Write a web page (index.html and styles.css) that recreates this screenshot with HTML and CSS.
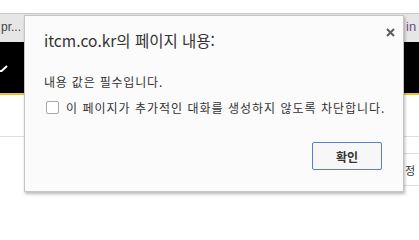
FILE: index.html
```html
<!DOCTYPE html>
<html lang="ko">
<head>
<meta charset="utf-8">
<title>alert</title>
<link rel="stylesheet" href="styles.css">
</head>
<body>
<div class="page">
  <div class="topgap"></div>
  <div class="tabs">
    <span class="tab-left">pr...</span>
    <span class="tab-right">in</span>
  </div>
  <div class="nav">
    <svg class="check" width="9" height="8" viewBox="0 0 9 8"><polyline points="-2,6 1,7.5 7,2" fill="none" stroke="#fff" stroke-width="2"/></svg>
  </div>
  <div class="accent"></div>
  <div class="content">
    <div class="left-col"><div class="row-a"></div></div>
    <div class="right-col">
      <div class="row-a"></div>
      <div class="row-b"></div>
      <div class="row-c">정</div>
    </div>
  </div>

  <div class="dialog">
    <svg class="close" width="9" height="9" viewBox="0 0 9 9"><path d="M1 1 L8 8 M8 1 L1 8" stroke="#5c5c5c" stroke-width="2"/></svg>
    <div class="title">itcm.co.kr의 페이지 내용:</div>
    <div class="message">내용 값은 필수입니다.</div>
    <label class="option"><span class="box"></span><span class="label-text">이 페이지가 추가적인 대화를 생성하지 않도록 차단합니다.</span></label>
    <div class="buttons"><button class="ok">확인</button></div>
  </div>
</div>
</body>
</html>
```

FILE: styles.css
```css
* { box-sizing: border-box; }
html, body { margin: 0; padding: 0; }
body {
  width: 419px;
  height: 203px;
  overflow: hidden;
  background: #fff;
  font-family: "Noto Sans CJK KR", "Noto Sans", sans-serif;
  color: #333;
}
.page { position: relative; width: 419px; height: 203px; }
.topgap { height: 14px; border-bottom: 1px solid #c9c9c9; }
.tabs {
  height: 28px;
  background: #e6e6e6;
  display: flex;
  align-items: center;
  font-size: 12px;
  color: #444;
  font-family: "Liberation Sans", "Noto Sans CJK KR", sans-serif;
}
.tab-left { padding-left: 1px; margin-top: -2px; }
.tab-right {
  margin-left: auto;
  width: 15px;
  padding-left: 2px;
  color: #6e4e82;
  font-size: 13px;
  margin-top: -3px;
}
.nav { height: 51px; background: #000; position: relative; }
.check { position: absolute; left: 0; top: 22px; }
.accent { height: 2px; background: #f0c419; }
.content { display: flex; }
.left-col { flex: 1; }
.right-col { width: 15px; font-size: 11px; color: #333; }
.row-a { height: 42px; border-bottom: 1px solid #dedede; }
.row-b { height: 17px; border-bottom: 1px solid #dedede; }
.row-c { height: 32px; border-bottom: 1px solid #dedede; line-height: 32px; padding-left: 1px; }

.dialog {
  position: absolute;
  left: 24px;
  top: 15px;
  width: 380px;
  height: 177px;
  background: #fbfbfb;
  border: 1px solid #c4c4c4;
  box-shadow: 1px 2px 3px rgba(0,0,0,0.28);
  padding: 14px 21px 0 19px;
  display: flex;
  flex-direction: column;
}
.close { position: absolute; left: 361px; top: 12px; }
.title { font-size: 15.5px; line-height: 20px; color: #333; }
.message { font-size: 12px; line-height: 16px; margin-top: 24px; color: #333; letter-spacing: 0.8px; }
.option { display: flex; align-items: center; height: 16px; margin-top: 9px; font-size: 12px; }
.box {
  width: 13px; height: 13px;
  margin-left: 2px;
  border: 1px solid #a8a8a8;
  border-radius: 2px;
  background: #fff;
  flex: none;
}
.label-text { margin-left: 7px; letter-spacing: 1px; color: #333; white-space: nowrap; }
.buttons { display: flex; justify-content: flex-end; margin-top: 27px; }
.ok {
  width: 70px;
  height: 28px;
  border: 1px solid #5b7fc6;
  border-radius: 2px;
  background: #f7f7f7;
  font-family: "Noto Sans CJK KR", sans-serif;
  font-size: 12px;
  font-weight: bold;
  color: #333;
  padding: 0;
}
```
